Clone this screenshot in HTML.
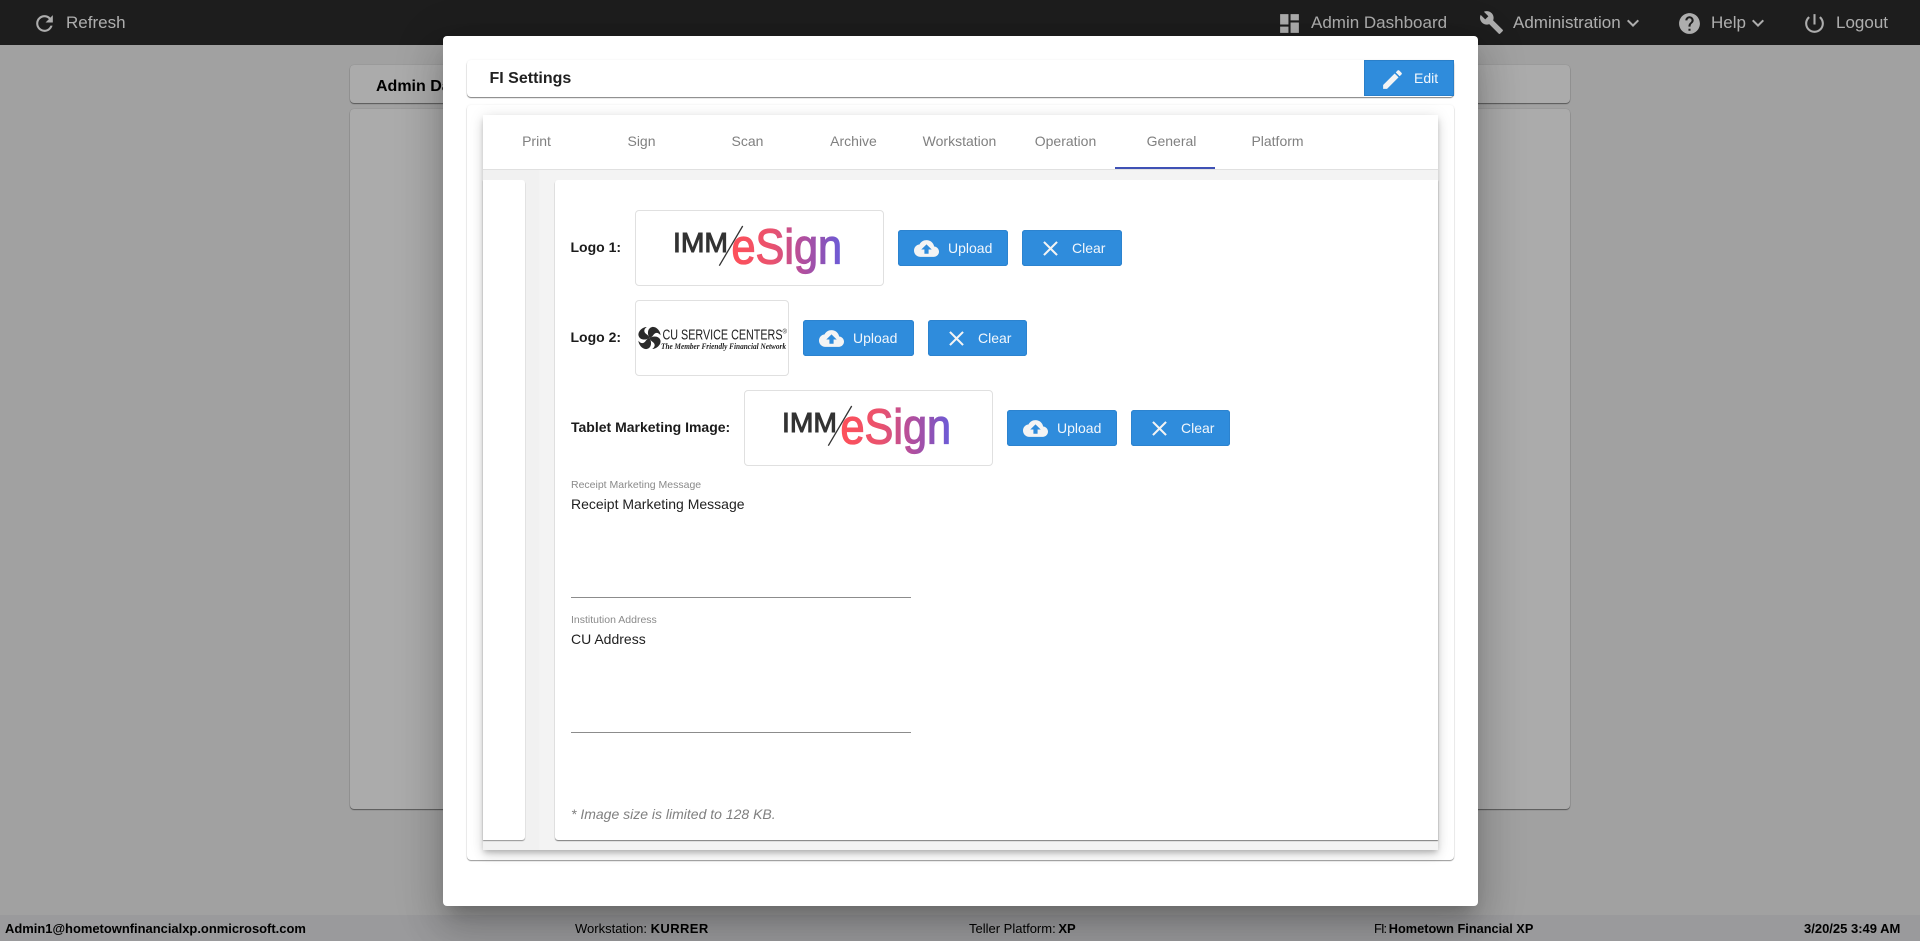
<!DOCTYPE html>
<html lang="en">
<head>
<meta charset="utf-8">
<title>FI Settings</title>
<style>
html,body{margin:0;padding:0;width:1920px;height:941px;overflow:hidden;background:#eee;font-family:"Liberation Sans",Arial,sans-serif;}
div,span,svg{position:absolute;box-sizing:border-box;}
.t{white-space:nowrap;}
.nav{color:#fff;font-size:17px;line-height:24px;height:24px;top:11px;}
.ic{fill:#fff;width:25px;height:25px;}
.back{left:350px;width:1220px;background:#fcfcfc;border-radius:4px;box-shadow:0 1px 1px rgba(0,0,0,.45),0 0 1px rgba(0,0,0,.25);}
.tab{top:131px;width:106px;height:20px;line-height:20px;text-align:center;font-size:14px;color:#808080;}
.lab{font-size:14px;font-weight:bold;color:#1b1b1b;line-height:20px;height:20px;}
.box{background:#fff;border:1px solid #e0e0e0;border-radius:4px;height:76px;}
.btn{height:36px;background:#2f8cdc;border-radius:3px;box-shadow:inset 0 0 0 1px #2c83cf,inset 0 -1px 0 #2a7cc4;color:#f2f7fc;font-size:14px;}
.btn span{line-height:36px;top:0;white-space:nowrap;left:50px;}
.btn svg{width:25px;height:25px;left:15.5px;top:6px;fill:#f4f4f4;}
.fl{font-size:10.5px;line-height:14px;height:14px;color:#8a8a8a;left:571px;}
.fv{font-size:14px;line-height:20px;height:20px;color:#1f1f1f;left:571px;}
.ul{left:571px;width:340px;height:1px;background:#8c8c8c;}
.bb{top:920px;line-height:18px;height:18px;font-size:13px;color:#000;white-space:nowrap;}
.bb b,.bb i{position:static;font-style:normal;}
</style>
</head>
<body>

<!-- Underlying page -->
<div style="left:0;top:0;width:1920px;height:45px;background:#2b2b2b;">
  <svg class="ic" style="left:32px;top:10.5px" viewBox="0 0 24 24"><path d="M17.65 6.35C16.2 4.9 14.21 4 12 4c-4.42 0-7.99 3.58-7.99 8s3.57 8 7.99 8c3.73 0 6.84-2.55 7.73-6h-2.08c-.82 2.33-3.04 4-5.65 4-3.31 0-6-2.69-6-6s2.69-6 6-6c1.66 0 3.14.69 4.22 1.78L13 11h7V4l-2.35 2.35z"/></svg>
  <span class="nav t" style="left:66px">Refresh</span>
  <svg class="ic" style="left:1277px;top:10.5px" viewBox="0 0 24 24"><path d="M3 13h8V3H3v10zm0 8h8v-6H3v6zm10 0h8V11h-8v10zm0-18v6h8V3h-8z"/></svg>
  <span class="nav t" style="left:1311px">Admin Dashboard</span>
  <svg class="ic" style="left:1478.5px;top:10px" viewBox="0 0 24 24"><path d="M22.7 19l-9.1-9.1c.9-2.3.4-5-1.5-6.9-2-2-5-2.4-7.4-1.3L9 6 6 9 1.6 4.7C.4 7.1.9 10.1 2.9 12.1c1.9 1.9 4.6 2.4 6.9 1.5l9.1 9.1c.4.4 1 .4 1.4 0l2.3-2.3c.5-.4.5-1.1.1-1.4z"/></svg>
  <span class="nav t" style="left:1513px">Administration</span>
  <svg class="ic" style="left:1620.5px;top:11px;width:24px;height:24px" viewBox="0 0 24 24"><path d="M7.41 8.59L12 13.17l4.59-4.58L18 10l-6 6-6-6 1.41-1.41z"/></svg>
  <svg class="ic" style="left:1677px;top:10.5px" viewBox="0 0 24 24"><path d="M12 2C6.48 2 2 6.48 2 12s4.48 10 10 10 10-4.48 10-10S17.52 2 12 2zm1 17h-2v-2h2v2zm2.07-7.75l-.9.92C13.45 12.9 13 13.5 13 15h-2v-.5c0-1.1.45-2.1 1.17-2.83l1.24-1.26c.37-.36.59-.86.59-1.41 0-1.1-.9-2-2-2s-2 .9-2 2H8c0-2.21 1.79-4 4-4s4 1.79 4 4c0 .88-.36 1.68-.93 2.25z"/></svg>
  <span class="nav t" style="left:1711px">Help</span>
  <svg class="ic" style="left:1746px;top:11px;width:24px;height:24px" viewBox="0 0 24 24"><path d="M7.41 8.59L12 13.17l4.59-4.58L18 10l-6 6-6-6 1.41-1.41z"/></svg>
  <svg class="ic" style="left:1801.7px;top:10.5px" viewBox="0 0 24 24"><path d="M13 3h-2v10h2V3zm4.83 2.17l-1.42 1.42C17.99 7.86 19 9.81 19 12c0 3.87-3.13 7-7 7s-7-3.13-7-7c0-2.19 1.01-4.14 2.58-5.42L6.17 5.17C4.23 6.82 3 9.26 3 12c0 4.97 4.03 9 9 9s9-4.03 9-9c0-2.74-1.23-5.18-3.17-6.83z"/></svg>
  <span class="nav t" style="left:1836px">Logout</span>
</div>

<div class="back" style="top:65px;height:38px;">
  <span class="t" style="left:26px;top:12px;line-height:20px;font-size:16px;font-weight:bold;color:#000">Admin Dashboard</span>
</div>
<div class="back" style="top:109px;height:700px;"></div>

<div style="left:0;top:915px;width:1920px;height:26px;background:#e3e4e6;"></div>
<span class="bb" style="left:5px;font-size:12.95px;font-weight:bold">Admin1@hometownfinancialxp.onmicrosoft.com</span>
<span class="bb" style="left:575px">Workstation: <b style="letter-spacing:.4px">KURRER</b></span>
<span class="bb" style="left:969px">Teller Platform: <b style="margin-left:-1px">XP</b></span>
<span class="bb" style="left:1374px"><i style="letter-spacing:-1px">FI:</i> <b style="font-size:12.75px;margin-left:-1px">Hometown Financial XP</b></span>
<span class="bb" style="left:1804px;font-weight:bold">3/20/25 3:49 AM</span>

<!-- Backdrop -->
<div style="left:0;top:0;width:1920px;height:941px;background:rgba(0,0,0,.32);"></div>

<!-- Modal -->
<div style="left:443px;top:36px;width:1035px;height:870px;background:#fff;border-radius:4px;box-shadow:0 11px 15px -7px rgba(0,0,0,.2),0 24px 38px 3px rgba(0,0,0,.14),0 9px 46px 8px rgba(0,0,0,.12);"></div>

<!-- FI Settings header -->
<div style="left:467px;top:60px;width:987px;height:37px;background:#fff;border-radius:4px;box-shadow:0 1px 1px rgba(0,0,0,.5),0 0 2px rgba(0,0,0,.06);"></div>
<span class="t" style="left:489.5px;top:69px;line-height:20px;font-size:16px;font-weight:bold;color:#212121">FI Settings</span>
<div style="left:1364px;top:60px;width:90px;height:36px;background:#2f8cdc;box-shadow:inset 0 0 0 1px #2a7fc9;color:#f2f7fc;font-size:14px;">
  <svg style="left:15.5px;top:6.5px;width:25px;height:25px;fill:#f4f4f4" viewBox="0 0 24 24"><path d="M3 17.25V21h3.75L17.81 9.94l-3.75-3.75L3 17.25zM20.71 7.04c.39-.39.39-1.02 0-1.41l-2.34-2.34c-.39-.39-1.02-.39-1.41 0l-1.83 1.83 3.75 3.75 1.83-1.83z"/></svg>
  <span class="t" style="left:50px;top:0;line-height:36px">Edit</span>
</div>

<!-- Outer card -->
<div style="left:467px;top:105px;width:987px;height:755px;background:#fff;border-radius:4px;box-shadow:0 1px 1px rgba(0,0,0,.4),0 0 2px rgba(0,0,0,.07);"></div>

<!-- Tab panel -->
<div style="left:483px;top:115px;width:955px;height:735px;background:#f1f1f1;box-shadow:0 3px 5px -1px rgba(0,0,0,.2),0 6px 10px 0 rgba(0,0,0,.1),0 1px 14px 0 rgba(0,0,0,.1);"></div>
<div style="left:483px;top:115px;width:955px;height:55px;background:#fff;border-bottom:1px solid #e0e0e0;"></div>
<div style="left:539px;top:170px;width:899px;height:680px;background:#f3f3f3;"></div>
<div class="tab" style="left:483.5px">Print</div>
<div class="tab" style="left:588.5px">Sign</div>
<div class="tab" style="left:694.5px">Scan</div>
<div class="tab" style="left:800.5px">Archive</div>
<div class="tab" style="left:906.5px">Workstation</div>
<div class="tab" style="left:1012.5px">Operation</div>
<div class="tab" style="left:1118.5px">General</div>
<div class="tab" style="left:1224.5px">Platform</div>
<div style="left:1115px;top:166.5px;width:100px;height:2px;background:#3f51b5;"></div>

<!-- Inner cards -->
<div style="left:483px;top:180px;width:41.5px;height:660px;background:#fff;border-radius:0 3px 3px 0;box-shadow:0 1px 1px rgba(0,0,0,.4);"></div>
<div style="left:555px;top:180px;width:883px;height:660px;background:#fff;border-radius:3px 0 0 3px;box-shadow:0 1px 1px rgba(0,0,0,.5);"></div>

<!-- Logo rows -->
<span class="lab t" style="left:570.5px;top:237px">Logo 1:</span>
<div class="box" style="left:635px;top:210px;width:249px"></div>
<div class="btn" style="left:898px;top:230px;width:110px"><svg viewBox="0 0 24 24"><path d="M19.35 10.04C18.67 6.59 15.64 4 12 4 9.11 4 6.6 5.64 5.35 8.04 2.34 8.36 0 10.91 0 14c0 3.31 2.69 6 6 6h13c2.76 0 5-2.24 5-5 0-2.64-2.05-4.78-4.65-4.96zM14 13v4h-4v-4H7l5-5 5 5h-3z"/></svg><span>Upload</span></div>
<div class="btn" style="left:1022px;top:230px;width:100px"><svg viewBox="0 0 24 24"><path d="M19 6.41L17.59 5 12 10.59 6.41 5 5 6.41 10.59 12 5 17.59 6.41 19 12 13.41 17.59 19 19 17.59 13.41 12 19 6.41z"/></svg><span>Clear</span></div>

<span class="lab t" style="left:570.5px;top:327px">Logo 2:</span>
<div class="box" style="left:635px;top:300px;width:154px"></div>
<div class="btn" style="left:803px;top:320px;width:111px"><svg viewBox="0 0 24 24"><path d="M19.35 10.04C18.67 6.59 15.64 4 12 4 9.11 4 6.6 5.64 5.35 8.04 2.34 8.36 0 10.91 0 14c0 3.31 2.69 6 6 6h13c2.76 0 5-2.24 5-5 0-2.64-2.05-4.78-4.65-4.96zM14 13v4h-4v-4H7l5-5 5 5h-3z"/></svg><span>Upload</span></div>
<div class="btn" style="left:928px;top:320px;width:99px"><svg viewBox="0 0 24 24"><path d="M19 6.41L17.59 5 12 10.59 6.41 5 5 6.41 10.59 12 5 17.59 6.41 19 12 13.41 17.59 19 19 17.59 13.41 12 19 6.41z"/></svg><span>Clear</span></div>

<span class="lab t" style="left:571px;top:417px">Tablet Marketing Image:</span>
<div class="box" style="left:744px;top:390px;width:249px"></div>
<div class="btn" style="left:1007px;top:410px;width:110px"><svg viewBox="0 0 24 24"><path d="M19.35 10.04C18.67 6.59 15.64 4 12 4 9.11 4 6.6 5.64 5.35 8.04 2.34 8.36 0 10.91 0 14c0 3.31 2.69 6 6 6h13c2.76 0 5-2.24 5-5 0-2.64-2.05-4.78-4.65-4.96zM14 13v4h-4v-4H7l5-5 5 5h-3z"/></svg><span>Upload</span></div>
<div class="btn" style="left:1131px;top:410px;width:99px"><svg viewBox="0 0 24 24"><path d="M19 6.41L17.59 5 12 10.59 6.41 5 5 6.41 10.59 12 5 17.59 6.41 19 12 13.41 17.59 19 19 17.59 13.41 12 19 6.41z"/></svg><span>Clear</span></div>

<!-- Logo artwork -->
<svg style="left:0;top:0;width:1920px;height:941px;" viewBox="0 0 1920 941">
  <defs>
    <linearGradient id="gs" gradientUnits="userSpaceOnUse" x1="731" x2="841" y1="0" y2="0">
      <stop offset="0" stop-color="#ff5058"/>
      <stop offset=".38" stop-color="#e9526f"/>
      <stop offset=".62" stop-color="#b84f9a"/>
      <stop offset=".82" stop-color="#9152b4"/>
      <stop offset="1" stop-color="#6b5bd8"/>
    </linearGradient>
  </defs>
  <g>
    <text x="673" y="252" font-family="Liberation Sans" font-size="28" fill="#333" stroke="#333" stroke-width="1" textLength="55" lengthAdjust="spacingAndGlyphs">IMM</text>
    <line x1="742.7" y1="226" x2="719.3" y2="265.7" stroke="#333" stroke-width="1.3"/>
    <text x="731.5" y="263.3" font-family="Liberation Sans" font-size="49" fill="url(#gs)" stroke="url(#gs)" stroke-width="1.3" textLength="110.5" lengthAdjust="spacingAndGlyphs">eSign</text>
  </g>
  <g transform="translate(109 180)">
    <text x="673" y="252" font-family="Liberation Sans" font-size="28" fill="#333" stroke="#333" stroke-width="1" textLength="55" lengthAdjust="spacingAndGlyphs">IMM</text>
    <line x1="742.7" y1="226" x2="719.3" y2="265.7" stroke="#333" stroke-width="1.3"/>
    <text x="731.5" y="263.3" font-family="Liberation Sans" font-size="49" fill="url(#gs)" stroke="url(#gs)" stroke-width="1.3" textLength="110.5" lengthAdjust="spacingAndGlyphs">eSign</text>
  </g>
  <g transform="translate(649.5 338) scale(.92)" fill="#2a2a2a">
    <path d="M0,0 C-3,-5 -2,-11 3,-12 C8,-12.5 12,-7 12,-3 C9,-7 6,-6 4,-3 C3,-1.5 1.5,-.5 0,0Z"/>
    <path transform="rotate(90)" d="M0,0 C-3,-5 -2,-11 3,-12 C8,-12.5 12,-7 12,-3 C9,-7 6,-6 4,-3 C3,-1.5 1.5,-.5 0,0Z"/>
    <path transform="rotate(180)" d="M0,0 C-3,-5 -2,-11 3,-12 C8,-12.5 12,-7 12,-3 C9,-7 6,-6 4,-3 C3,-1.5 1.5,-.5 0,0Z"/>
    <path transform="rotate(270)" d="M0,0 C-3,-5 -2,-11 3,-12 C8,-12.5 12,-7 12,-3 C9,-7 6,-6 4,-3 C3,-1.5 1.5,-.5 0,0Z"/>
  </g>
  <text x="662.5" y="339.5" font-family="Liberation Sans" font-size="14.5" fill="#222" textLength="120" lengthAdjust="spacingAndGlyphs">CU SERVICE CENTERS</text>
  <text x="782.5" y="333.5" font-family="Liberation Sans" font-size="6" fill="#222">®</text>
  <text x="661" y="349" font-family="Liberation Serif" font-size="8.5" font-weight="bold" font-style="italic" fill="#222" textLength="125" lengthAdjust="spacingAndGlyphs">The Member Friendly Financial Network</text>
</svg>

<!-- Fields -->
<span class="fl t" style="top:477.5px">Receipt Marketing Message</span>
<span class="fv t" style="top:494px">Receipt Marketing Message</span>
<div class="ul" style="top:597px"></div>
<span class="fl t" style="top:612.5px">Institution Address</span>
<span class="fv t" style="top:629px">CU Address</span>
<div class="ul" style="top:732px"></div>
<span class="t" style="left:571px;top:804px;font-size:14px;line-height:20px;font-style:italic;color:#808080">* Image size is limited to 128 KB.</span>

</body>
</html>
